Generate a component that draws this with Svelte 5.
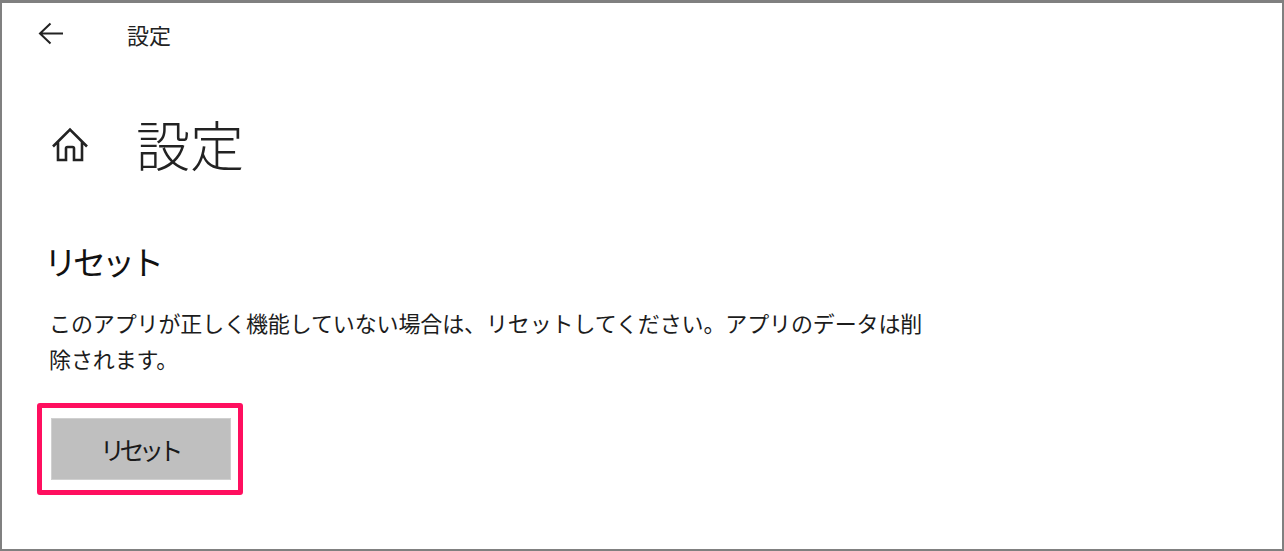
<script>
  const title = '設定';
</script>

<div class="window">
  <header class="topbar">
    <svg class="back" viewBox="0 0 26 24" width="26" height="24" aria-hidden="true">
      <path d="M25 11.5H2M12.5 1.5 2 11.5l10.5 10" fill="none" stroke="#222" stroke-width="2"/>
    </svg>
    <span class="bar-title">{title}</span>
  </header>

  <div class="heading">
    <svg class="home" viewBox="0 0 38 36" width="38" height="36" aria-hidden="true">
      <path d="M2 19.5 19 2.5l17 17M7 15v18h8V21.5a1.5 1.5 0 0 1 1.5-1.5h5a1.5 1.5 0 0 1 1.5 1.5V33h8V15" fill="none" stroke="#222" stroke-width="2.6"/>
    </svg>
    <h1>{title}</h1>
  </div>

  <h2>リセット</h2>
  <p>このアプリが正しく機能していない場合は、リセットしてください。アプリのデータは削除されます。</p>

  <div class="highlight">
    <button type="button">リセット</button>
  </div>
</div>

<style>
  :global(body) {
    margin: 0;
    background: #fff;
  }
  .window {
    box-sizing: border-box;
    width: 1284px;
    height: 551px;
    border: 2px solid #808080;
    border-top-width: 3px;
    background: #fff;
    color: #1a1a1a;
    font-family: "Noto Sans CJK JP", "Noto Sans", sans-serif;
    display: flex;
    flex-direction: column;
    align-items: flex-start;
    overflow: hidden;
  }
  .topbar {
    display: flex;
    align-items: center;
    height: 56px;
    padding-left: 36px;
    box-sizing: border-box;
    margin-top: 3px;
  }
  .bar-title {
    margin-left: 63px;
    font-size: 22px;
    line-height: 30px;
    font-weight: 400;
    color: #222;
  }
  .heading {
    display: flex;
    align-items: center;
    margin-top: 45px;
    padding-left: 49px;
    height: 76px;
  }
  h1 {
    margin: -2px 0 0 47px;
    font-size: 54px;
    line-height: 76px;
    font-weight: 300;
    color: #222;
  }
  h2 {
    margin: 54px 0 0 42px;
    font-size: 33px;
    line-height: 48px;
    font-weight: 400;
    color: #111;
    letter-spacing: -4px;
  }
  p {
    margin: 19px 0 0 47px;
    width: 885px;
    font-size: 22px;
    line-height: 36px;
    letter-spacing: -0.12px;
    font-weight: 400;
    color: #1c1c1c;
  }
  .highlight {
    box-sizing: border-box;
    margin: 27px 0 0 35px;
    width: 206px;
    height: 92px;
    border: 5px solid #ff0f5f;
    border-radius: 3px;
    padding: 10px 7px 10px 9px;
    background: #fff;
  }
  button {
    display: block;
    box-sizing: border-box;
    width: 100%;
    height: 100%;
    margin: 0;
    padding: 0 4px 0 0;
    border: 1px solid #d0d0d0;
    background: #bfbfbf;
    color: #1a1a1a;
    font-family: inherit;
    font-size: 25px;
    letter-spacing: -5.5px;
    font-weight: 400;
  }
</style>
